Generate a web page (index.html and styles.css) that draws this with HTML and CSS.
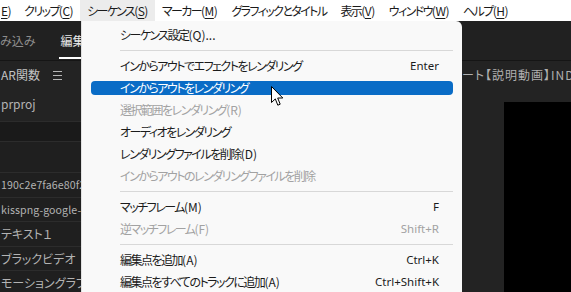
FILE: index.html
```html
<!DOCTYPE html>
<html lang="ja">
<head>
    <meta charset="UTF-8">
    <meta name="viewport" content="width=device-width, initial-scale=1.0">
    <title>シーケンス</title>
    <link rel="stylesheet" href="styles.css">
</head>
<body>
    <header class="menubar">
        <span class="menu-item first"><span class="acc"><u>E</u>)</span></span>
        <span class="menu-item">クリップ<span class="acc">(<u>C</u>)</span></span>
        <span class="menu-item open">シーケンス<span class="acc">(<u>S</u>)</span></span>
        <span class="menu-item">マーカー<span class="acc">(<u>M</u>)</span></span>
        <span class="menu-item">グラフィックとタイトル</span>
        <span class="menu-item">表示<span class="acc">(<u>V</u>)</span></span>
        <span class="menu-item">ウィンドウ<span class="acc">(<u>W</u>)</span></span>
        <span class="menu-item">ヘルプ<span class="acc">(<u>H</u>)</span></span>
    </header>

    <div class="workspace">
        <div class="tabs">
            <span class="tab">み込み</span>
            <span class="tab active">編集</span>
        </div>
        <div class="panels">
            <section class="project">
                <div class="panel-head">
                    <span>AR関数</span>
                    <span class="hamburger"><i></i><i></i><i></i></span>
                </div>
                <div class="project-name">prproj</div>
                <div class="col-head"></div>
                <div class="bin-row tall"></div>
                <div class="bin-row latin">190c2e7fa6e80f2c5d1</div>
                <div class="bin-row latin">kisspng-google-drive</div>
                <div class="bin-row">テキスト１</div>
                <div class="bin-row">ブラックビデオ</div>
                <div class="bin-row">モーショングラフィックス</div>
            </section>
            <section class="monitor">
                <div class="panel-head monitor-title">ート【説明動画】INDIVIDUAL</div>
                <div class="screen"></div>
            </section>
        </div>
    </div>

    <div class="dropdown">
        <div class="item"><div class="row"><span>シーケンス設定<span class="acc">(Q)...</span></span><span class="key"></span></div></div>
        <div class="sep"></div>
        <div class="item"><div class="row"><span>インからアウトでエフェクトをレンダリング</span><span class="key">Enter</span></div></div>
        <div class="item active"><div class="row"><span>インからアウトをレンダリング</span><span class="key"></span></div></div>
        <div class="item disabled"><div class="row"><span>選択範囲をレンダリング<span class="acc">(R)</span></span><span class="key"></span></div></div>
        <div class="item"><div class="row"><span>オーディオをレンダリング</span><span class="key"></span></div></div>
        <div class="item"><div class="row"><span>レンダリングファイルを削除<span class="acc">(D)</span></span><span class="key"></span></div></div>
        <div class="item disabled"><div class="row"><span>インからアウトのレンダリングファイルを削除</span><span class="key"></span></div></div>
        <div class="sep"></div>
        <div class="item"><div class="row"><span>マッチフレーム<span class="acc">(M)</span></span><span class="key">F</span></div></div>
        <div class="item disabled"><div class="row"><span>逆マッチフレーム<span class="acc">(F)</span></span><span class="key">Shift+R</span></div></div>
        <div class="sep"></div>
        <div class="item"><div class="row"><span>編集点を追加<span class="acc">(A)</span></span><span class="key">Ctrl+K</span></div></div>
        <div class="item"><div class="row"><span>編集点をすべてのトラックに追加<span class="acc">(A)</span></span><span class="key">Ctrl+Shift+K</span></div></div>
    </div>

    <svg class="cursor" width="13" height="21" viewBox="0 0 13 21">
        <path d="M0.5 0.5 L0.5 16.5 L4.3 12.9 L6.8 19.2 L9.2 18.2 L6.7 12 L11.8 12 Z" fill="#fff" stroke="#000" stroke-width="1" stroke-linejoin="round"/>
    </svg>
</body>
</html>
```

FILE: styles.css
```css
body {
    margin: 0;
    width: 571px;
    height: 292px;
    overflow: hidden;
    position: relative;
    background: #232323;
    font-family: 'Noto Sans CJK JP', sans-serif;
    font-feature-settings: "palt" 1;
    font-size: 12px;
}

.acc {
    letter-spacing: 0;
}

/* top menu bar */
.menubar {
    display: flex;
    height: 21px;
    line-height: 21px;
    background: #fff;
    color: #1a1a1a;
    white-space: nowrap;
    letter-spacing: -1.6px;
}

.menubar .acc {
    letter-spacing: -0.5px;
}

.menu-item {
    padding: 0 7px;
}

.menu-item.first {
    padding: 0 6px 0 1px;
}

.menu-item.open {
    background: #ececec;
}

.menu-item u {
    text-underline-offset: 2px;
}

/* workspace behind the dropdown */
.tabs {
    display: flex;
    height: 39px;
    background: #212121;
    border-bottom: 1px solid #151515;
}

.tab {
    line-height: 39px;
    color: #8e8e8e;
    margin-right: 24px;
}

.tab.active {
    color: #e8e8e8;
    padding-left: 1px;
    flex: 1;
    max-width: 60px;
    box-shadow: inset 0 -2px #fff;
    height: 38px;
}

.panels {
    display: flex;
}

.project {
    width: 462px;
    color: #b3b3b3;
    white-space: nowrap;
    overflow: hidden;
}

.panel-head {
    display: flex;
    align-items: center;
    height: 26px;
    padding-left: 1px;
    color: #c4c4c4;
}

.hamburger {
    display: flex;
    flex-direction: column;
    gap: 3px;
    margin-left: 13px;
    margin-top: 3px;
}

.hamburger i {
    display: block;
    width: 9px;
    height: 1px;
    background: #b5b5b5;
}

.project-name {
    height: 34px;
    line-height: 33px;
    padding-left: 1px;
    border-bottom: 1px solid #2c2c2c;
}

.col-head {
    height: 19px;
    background: #1a1a1a;
    border-bottom: 1px solid #2c2c2c;
}

.bin-row {
    height: 23.5px;
    line-height: 23.5px;
    padding-left: 1px;
    background: #1f1f1f;
    border-bottom: 1px solid #2c2c2c;
}

.bin-row.latin {
    font-size: 10.6px;
    letter-spacing: 0.1px;
}

.bin-row.tall {
    height: 30px;
}

.monitor {
    flex: 1;
    overflow: hidden;
    white-space: nowrap;
}

.monitor-title {
    padding-left: 0;
    color: #b0b0b0;
    letter-spacing: 1px;
}

.screen {
    margin: 15px 0 0 42px;
    height: 200px;
    background: #000;
}

/* dropdown menu */
.dropdown {
    position: absolute;
    left: 81px;
    top: 21px;
    width: 381px;
    height: 290px;
    padding-top: 3px;
    background: #f9f9f9;
    border-radius: 0 6px 0 0;
    box-shadow: 1px 0 0 #e2e2e2 inset;
    color: #1b1b1b;
}

.item {
    padding: 4px 9px 4px 10px;
}

.row {
    display: flex;
    justify-content: space-between;
    height: 14px;
    line-height: 14px;
    padding: 0 14px 0 29px;
    border-radius: 4px;
    white-space: nowrap;
    letter-spacing: -1.5px;
}

.item.active .row {
    background: #0a6cc6;
    color: #fff;
}

.item.disabled {
    color: #a2a2a2;
}

.key {
    font-family: 'Noto Sans', sans-serif;
    font-size: 11.5px;
    letter-spacing: 0;
}

.sep {
    height: 1px;
    margin: 4px 9px 4px 39px;
    background: #d8d8d8;
}

.cursor {
    position: absolute;
    left: 271px;
    top: 86px;
}
```
